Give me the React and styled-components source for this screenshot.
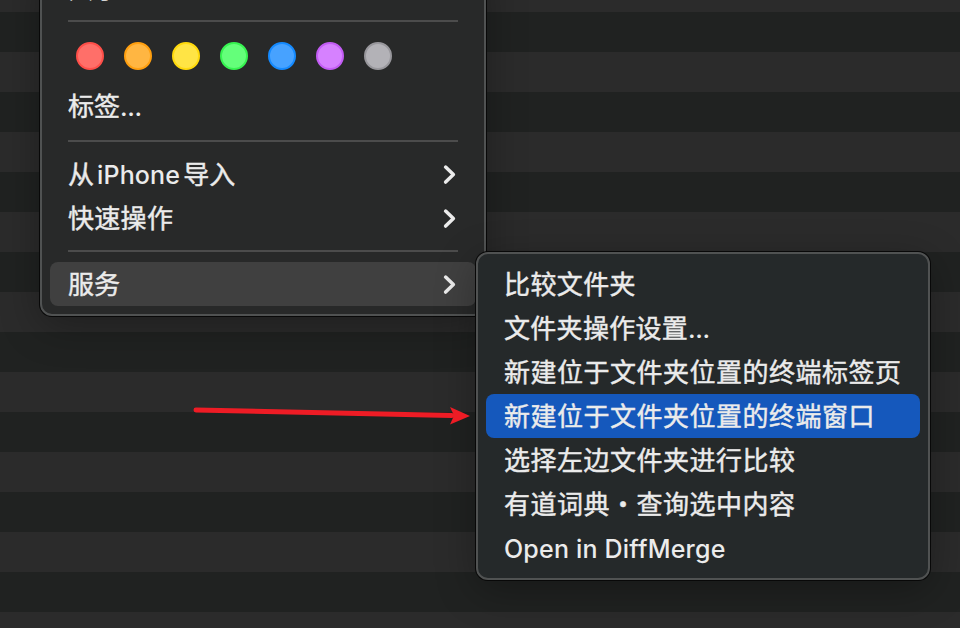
import React from "react";
import styled, { createGlobalStyle } from "styled-components";

const GlobalStyle = createGlobalStyle`
  *, *::before, *::after { box-sizing: border-box; }
  body { margin: 0; overflow: hidden; background: #202221; }
`;

const Desktop = styled.main`
  position: relative;
  width: 960px;
  height: 628px;
  overflow: hidden;
  font-family: Inter, "Noto Sans CJK SC", sans-serif;
  font-size: 26px;
  color: #ebebeb;
  background: repeating-linear-gradient(
    to bottom,
    #202221 0 40px,
    #2b2b2b 40px 80px
  ) 0 -68px / 100% 800px;
`;

const Menu = styled.div`
  position: absolute;
  border: 2px solid #505252;
  border-radius: 12px;
  padding: 8px;
  display: flex;
  flex-direction: column;
`;

const ContextMenu = styled(Menu)`
  left: 40px;
  bottom: 312px;
  width: 446px;
  background: #282929;
  box-shadow: 0 0 0 1px #080808, 0 10px 40px rgba(0, 0, 0, 0.3);
`;

const SubMenu = styled(Menu)`
  left: 476px;
  top: 252px;
  width: 454px;
  background: #25292a;
  box-shadow: 0 0 0 1px #080808, 0 10px 40px rgba(0, 0, 0, 0.3);
`;

const Item = styled.div`
  display: flex;
  align-items: center;
  justify-content: space-between;
  flex: none;
  height: 44px;
  padding: 2px 18px 0;
  border-radius: 8px;
  white-space: pre;
  background: ${(p) => p.$fill || "transparent"};
`;

const Label = styled.span`
  line-height: 42px;
  letter-spacing: ${(p) => p.$track || 0}px;
  -webkit-text-stroke: 0.45px currentColor;
`;

const Latin = styled.span`
  font-weight: 500;
  font-size: 25px;
  letter-spacing: ${(p) => p.$track || 0}px;
  margin: 0 ${(p) => p.$gap || 0}px;
  -webkit-text-stroke: 0;
`;

const Separator = styled.div`
  flex: none;
  height: 2px;
  margin: ${(p) => p.$before}px 18px 10px;
  background: #4c4c4c;
`;

const TagRow = styled.div`
  display: flex;
  gap: 20px;
  height: 52px;
  padding: 10px 26px 0;
`;

const TagDot = styled.span`
  width: 28px;
  height: 28px;
  border-radius: 50%;
  border: 2px solid ${(p) => p.$edge};
  background: ${(p) => p.$fill};
`;

const ChevronIcon = styled.svg`
  width: 16px;
  height: 24px;
  margin-right: 1px;
`;

const Arrow = styled.svg`
  position: absolute;
  left: 190px;
  top: 400px;
`;

const Chevron = () => (
  <ChevronIcon viewBox="0 0 16 24" fill="none">
    <path d="M4.6 4.1 12.4 11.6 4.6 19.1" stroke="#ebebeb" strokeWidth="3.5" strokeLinecap="round" strokeLinejoin="round" />
  </ChevronIcon>
);

const Ellipsis = () => <Latin $track={-0.4}>...</Latin>;

const tags = [
  ["#ff6f69", "#ff4f49"],
  ["#ffb642", "#ff9f0f"],
  ["#ffe445", "#ffd90c"],
  ["#64ff7a", "#36f350"],
  ["#47a2ff", "#148aff"],
  ["#d681ff", "#c35cf5"],
  ["#b3b2b7", "#98979c"],
];

const services = [
  { text: "比较文件夹", track: 0.4 },
  { text: "文件夹操作设置", track: 0.3, more: true },
  { text: "新建位于文件夹位置的终端标签页", track: 0.5 },
  { text: "新建位于文件夹位置的终端窗口", track: 0.5, fill: "#1558bc" },
  { text: "选择左边文件夹进行比较", track: 0.5 },
  { text: "有道词典・查询选中内容", track: 0.5 },
];

export default function App() {
  return (
    <>
      <GlobalStyle />
      <Desktop>
        <ContextMenu>
          <Item><Label>共享<Ellipsis /></Label></Item>
          <Separator $before={10} />
          <TagRow>
            {tags.map(([fill, edge]) => <TagDot key={fill} $fill={fill} $edge={edge} />)}
          </TagRow>
          <Item><Label>标签<Ellipsis /></Label></Item>
          <Separator $before={12} />
          <Item>
            <Label>从<Latin $gap={3} $track={0.15}>iPhone</Latin>导入</Label>
            <Chevron />
          </Item>
          <Item><Label $track={0.3}>快速操作</Label><Chevron /></Item>
          <Separator $before={10} />
          <Item $fill="#404040"><Label>服务</Label><Chevron /></Item>
        </ContextMenu>
        <SubMenu>
          {services.map(({ text, track, fill, more }) => (
            <Item key={text} $fill={fill}>
              <Label $track={track}>{text}{more && <Ellipsis />}</Label>
            </Item>
          ))}
          <Item><Label><Latin $track={0.2}>Open in DiffMerge</Latin></Label></Item>
        </SubMenu>
        <Arrow width="284" height="32" viewBox="0 0 284 32">
          <path d="M6 10 262 15.4" stroke="#ee1c25" strokeWidth="5" strokeLinecap="round" />
          <path d="M260 7 280 16 260 24.5 264 15.5Z" fill="#ee1c25" />
        </Arrow>
      </Desktop>
    </>
  );
}
